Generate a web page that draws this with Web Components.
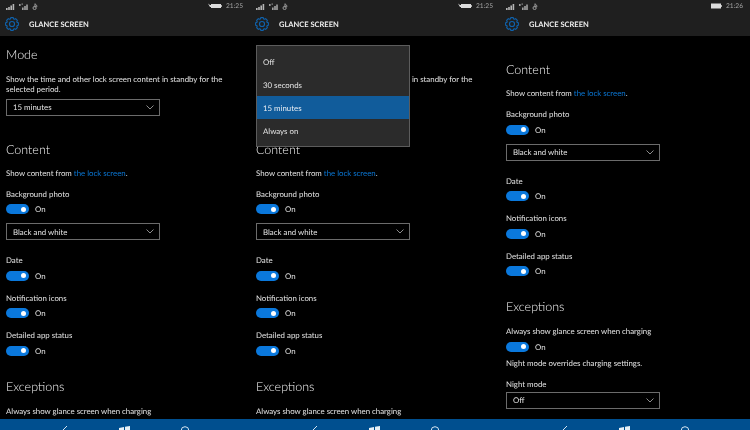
<!DOCTYPE html>
<html>
<head>
<meta charset="utf-8">
<title>Glance screen</title>
<style>
  html, body { margin: 0; padding: 0; background: #000; }
  body {
    width: 750px;
    height: 430px;
    overflow: hidden;
    display: flex;
    font-family: Lato, "Open Sans", sans-serif;
    color: #e6e6e6;
    text-rendering: geometricPrecision;
    filter: blur(0.3px);
  }
</style>
</head>
<body>
<glance-screen time="21:25" charging></glance-screen>
<glance-screen time="21:25" charging open></glance-screen>
<glance-screen time="21:26" scrolled></glance-screen>

<script>
function gearPath() {
  // outline of the settings cog, eight teeth
  const pts = [];
  const teeth = 8;
  for (let i = 0; i < teeth; i++) {
    const a = (i / teeth) * Math.PI * 2;
    const step = Math.PI * 2 / teeth;
    [[-0.3, 6.1], [-0.17, 7.4], [0.17, 7.4], [0.3, 6.1]].forEach(([f, r]) => {
      const t = a + f * step * 1.4;
      pts.push((8 + r * Math.cos(t)).toFixed(2) + " " + (8 + r * Math.sin(t)).toFixed(2));
    });
  }
  return "M" + pts.join("L") + "Z";
}

class StatusBar extends HTMLElement {
  connectedCallback() {
    const time = this.getAttribute("time") || "";
    const charging = this.hasAttribute("charging");
    this.attachShadow({ mode: "open" }).innerHTML = `
      <style>
        :host { display: flex; align-items: center; box-sizing: border-box; height: 12px; padding: 0 7px 0 6px; font-size: 6.6px; color: #a8a8a8; }
        svg { display: block; }
        .left { display: flex; gap: 4px; align-items: center; flex: 1; }
        .time { margin-left: 4px; line-height: 12px; }
      </style>
      <div class="left">
        <svg width="9" height="7" viewBox="0 0 9 7" fill="#b5b5b5"><rect x="0" y="5" width="1.6" height="2"/><rect x="2.2" y="4" width="1.6" height="3"/><rect x="4.4" y="2.5" width="1.6" height="4.5"/><rect x="6.6" y="1" width="1.6" height="6"/></svg>
        <svg width="9" height="7" viewBox="0 0 9 7" fill="#a0a0a0"><rect x="0" y="1" width="1.6" height="2"/><rect x="2.6" y="0.5" width="1.2" height="1.2"/><rect x="3" y="4.5" width="1.6" height="2.5"/><rect x="5.2" y="3" width="1.6" height="4"/><rect x="7.2" y="1.5" width="1.6" height="5.5"/></svg>
        <svg width="6" height="7" viewBox="0 0 6 7" fill="none" stroke="#a8a8a8" stroke-width="0.9"><path d="M3 0.5V4.5"/><circle cx="2.6" cy="5" r="1.6"/><path d="M3.3 1.2 Q5.4 2.2 4.8 4"/></svg>
      </div>
      <svg width="${charging ? 14 : 11}" height="6" viewBox="0 0 ${charging ? 14 : 11} 6">
        ${charging
          ? '<path d="M0 0.5L2 2H3V1H13V5H3V4H2Z" fill="#dcdcdc"/><rect x="13" y="2" width="1" height="2" fill="#aaa"/>'
          : '<rect x="0" y="0.5" width="10" height="5" fill="#dcdcdc"/><rect x="10" y="2" width="1" height="2" fill="#aaa"/>'}
      </svg>
      <span class="time">${time}</span>`;
  }
}

class AppHeader extends HTMLElement {
  connectedCallback() {
    this.attachShadow({ mode: "open" }).innerHTML = `
      <style>
        :host { display: flex; align-items: center; gap: 10px; height: 24px; padding-left: 5px; }
        span { font-size: 7.5px; font-weight: 700; color: #f0f0f0; }
        svg { display: block; }
      </style>
      <svg width="14" height="14" viewBox="0 0 16 16" fill="none" stroke="#0f62ad" stroke-width="1.3" stroke-linejoin="round">
        <path d="${gearPath()}"/><circle cx="8" cy="8" r="2.9"/>
      </svg>
      <span><slot></slot></span>`;
  }
}

class SectionTitle extends HTMLElement {
  connectedCallback() {
    this.attachShadow({ mode: "open" }).innerHTML = `
      <style>
        :host { display: block; font-size: 12.5px; line-height: 20px; font-weight: 300; color: #f2f2f2; }
      </style><slot></slot>`;
  }
}

class ToggleRow extends HTMLElement {
  connectedCallback() {
    this.attachShadow({ mode: "open" }).innerHTML = `
      <style>
        :host { display: flex; align-items: center; gap: 6px; height: 10px; margin-top: 5.5px; }
        .track { display: flex; align-items: center; justify-content: flex-end; box-sizing: border-box; width: 23px; height: 10px; padding-right: 3px; border-radius: 5px; background: #0a78dc; }
        .knob { width: 5px; height: 5px; border-radius: 50%; background: #fff; }
      </style>
      <div class="track"><div class="knob"></div></div>
      <span><slot></slot></span>`;
  }
}

class ComboBox extends HTMLElement {
  connectedCallback() {
    this.attachShadow({ mode: "open" }).innerHTML = `
      <style>
        :host { display: flex; align-items: center; justify-content: space-between; box-sizing: border-box; width: 154px; height: 17px; padding: 0 5px 0 6px; border: 1px solid #6b6b6b; }
        svg { display: block; }
      </style>
      <span><slot></slot></span>
      <svg width="8" height="5" viewBox="0 0 8 5" fill="none" stroke="#b0b0b0" stroke-width="0.8"><path d="M0.5 0.5L4 4L7.5 0.5"/></svg>`;
  }
}

class DropList extends HTMLElement {
  connectedCallback() {
    const items = (this.getAttribute("items") || "").split("|");
    const selected = this.getAttribute("selected");
    this.attachShadow({ mode: "open" }).innerHTML = `
      <style>
        :host { position: absolute; left: 6px; top: 45px; box-sizing: border-box; width: 154px; padding: 4px 0 4px; background: #2b2b2b; border: 1px solid #5c5c5c; }
        div { display: flex; align-items: center; height: 23px; padding-left: 6px; }
        .sel { background: #115c9b; color: #e8eef4; }
      </style>
      ${items.map(i => `<div class="${i === selected ? "sel" : ""}">${i}</div>`).join("")}`;
  }
}

class NavBar extends HTMLElement {
  connectedCallback() {
    this.attachShadow({ mode: "open" }).innerHTML = `
      <style>
        :host { display: flex; justify-content: center; gap: 49px; height: 11px; overflow: hidden; background: #004f8f; padding: 7px 1px 0 0; box-sizing: border-box; }
        svg { display: block; flex: none; }
      </style>
      <svg width="11" height="12" viewBox="0 0 11 12" fill="none" stroke="#d6e4f0" stroke-width="1"><path d="M8 0L1 7L8 14"/></svg>
      <svg width="11" height="12" viewBox="0 0 11 12" fill="#e8f0f6"><path d="M0 2L5 1V5.2H0ZM6 0.8L11 0V5.2H6ZM0 6.2H5V10.5L0 9.7ZM6 6.2H11V11.4L6 10.6Z"/></svg>
      <svg width="11" height="12" viewBox="0 0 11 12" fill="none" stroke="#d6e4f0" stroke-width="1"><circle cx="6" cy="4.5" r="3.8"/><path d="M3.2 7.3L0.5 11"/></svg>`;
  }
}

class GlanceScreen extends HTMLElement {
  connectedCallback() {
    const scrolled = this.hasAttribute("scrolled");
    const time = this.getAttribute("time");
    const charging = this.hasAttribute("charging") ? "charging" : "";
    const popup = this.hasAttribute("open")
      ? `<drop-list items="Off|30 seconds|15 minutes|Always on" selected="15 minutes"></drop-list>` : "";
    const mode = scrolled ? "" : `
          <section-title>Mode</section-title>
          <p class="desc">Show the time and other lock screen content in standby for the selected period.</p>
          <combo-box>15 minutes</combo-box>`;
    const night = scrolled ? `
          <toggle-row>On</toggle-row>
          <p class="night">Night mode overrides charging settings.</p>
          <p class="night-label">Night mode</p>
          <combo-box class="night-combo">Off</combo-box>` : "";
    this.attachShadow({ mode: "open" }).innerHTML = `
      <style>
        :host { display: flex; flex-direction: column; position: relative; flex: none; width: 250px; height: 430px; overflow: hidden; background: #000; font-size: 7.85px; color: #e4e4e4; }
        header { flex: none; height: 36px; background: #1f1f1f; }
        .body { flex: 1; min-height: 0; overflow: hidden; }
        .page { padding: ${scrolled ? 24 : 9}px 6px 0; }
        p { margin: 0; line-height: 10px; }
        .desc { margin-top: 9px; line-height: 10.3px; }
        a { color: #0a78d7; text-decoration: none; }
        combo-box { margin-top: 4px; }
        section-title.next { margin-top: ${scrolled ? 0 : 24}px; }
        .from { margin-top: 8px; }
        .field { margin-top: 11px; }
        .after-combo { margin-top: 15px; }
        .tight { margin-top: 12px; }
        combo-box.combo-gap { margin-top: 9px; }
        .night { margin-top: 6px; }
        .night-label { margin-top: 11px; }
        combo-box.night-combo { margin-top: 3px; }
        .ex { margin-top: 21px; }
        .always { margin-top: 9px; }
      </style>
      <header>
        <status-bar time="${time}" ${charging}></status-bar>
        <app-header>GLANCE SCREEN</app-header>
      </header>
      <div class="body">
        <div class="page">${mode}
          <section-title class="next">Content</section-title>
          <p class="from">Show content from <a>the lock screen</a>.</p>
          <p class="field">Background photo</p>
          <toggle-row>On</toggle-row>
          <combo-box class="combo-gap">Black and white</combo-box>
          <p class="after-combo">Date</p>
          <toggle-row>On</toggle-row>
          <p class="tight">Notification icons</p>
          <toggle-row>On</toggle-row>
          <p class="tight">Detailed app status</p>
          <toggle-row>On</toggle-row>

          <section-title class="ex">Exceptions</section-title>
          <p class="always">Always show glance screen when charging</p>${night}
        </div>
      </div>
      <nav-bar></nav-bar>
      ${popup}`;
  }
}

customElements.define("status-bar", StatusBar);
customElements.define("app-header", AppHeader);
customElements.define("section-title", SectionTitle);
customElements.define("toggle-row", ToggleRow);
customElements.define("combo-box", ComboBox);
customElements.define("drop-list", DropList);
customElements.define("nav-bar", NavBar);
customElements.define("glance-screen", GlanceScreen);
</script>
</body>
</html>
